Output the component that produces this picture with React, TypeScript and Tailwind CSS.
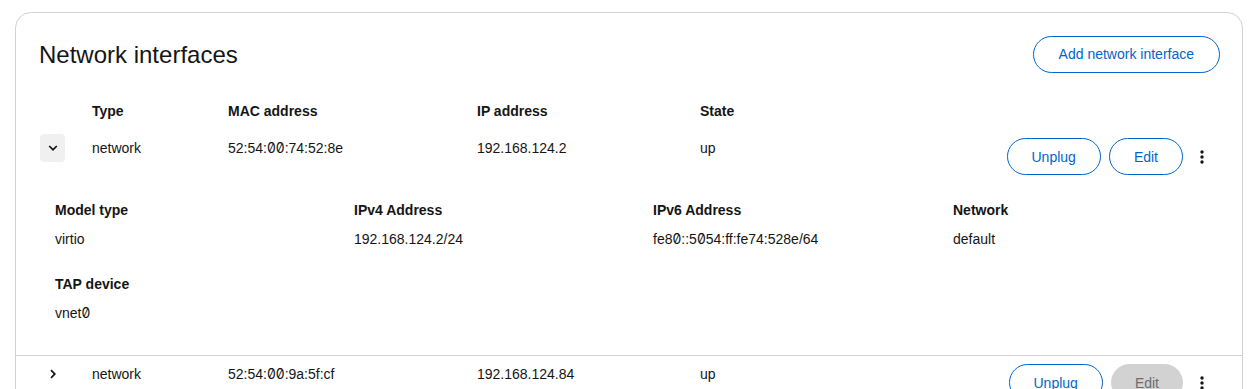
import React from "react";

const font = { fontFamily: '"Liberation Sans", Arial, sans-serif' };

// zeros in the reference are slashed; render them with Inter's slashed-zero
const Z = ({ v }: { v: string }) => (
  <>
    {v.split(/(0)/).map((part, i) =>
      part === "0" ? (
        <span key={i} className="slashed-zero" style={{ fontFamily: "Inter, sans-serif" }}>
          0
        </span>
      ) : (
        <React.Fragment key={i}>{part}</React.Fragment>
      ),
    )}
  </>
);

const ChevronDown = () => (
  <svg viewBox="0 0 10 7" className="h-[7px] w-[10px]" fill="#151515">
    <path d="M0.6 1.6 L1.8 0.4 L5 3.6 L8.2 0.4 L9.4 1.6 L5 6 Z" />
  </svg>
);

const ChevronRight = () => (
  <svg viewBox="0 0 7 10" className="h-[10px] w-[7px]" fill="#151515">
    <path d="M1.6 0.6 L0.4 1.8 L3.6 5 L0.4 8.2 L1.6 9.4 L6 5 Z" />
  </svg>
);

const Kebab = () => (
  <svg viewBox="0 0 4 14" className="h-[14px] w-[4px]" fill="#151515">
    <circle cx="2" cy="2" r="1.7" />
    <circle cx="2" cy="7" r="1.7" />
    <circle cx="2" cy="12" r="1.7" />
  </svg>
);

const rowGrid = "grid grid-cols-[76px_136px_249px_223px_1fr_auto] items-start";

type Iface = {
  mac: string;
  ip: string;
  state: string;
  expanded: boolean;
  editDisabled: boolean;
};

const interfaces: Iface[] = [
  { mac: "52:54:00:74:52:8e", ip: "192.168.124.2", state: "up", expanded: true, editDisabled: false },
  { mac: "52:54:00:9a:5f:cf", ip: "192.168.124.84", state: "up", expanded: false, editDisabled: true },
];

const details = [
  { label: "Model type", value: "virtio" },
  { label: "IPv4 Address", value: "192.168.124.2/24" },
  { label: "IPv6 Address", value: "fe80::5054:ff:fe74:528e/64" },
  { label: "Network", value: "default" },
  { label: "TAP device", value: "vnet0" },
];

function Actions({ editDisabled }: { editDisabled: boolean }) {
  return (
    <div className="flex items-center pr-[24px]">
      <button className="h-[37px] rounded-full border border-[#0066cc] px-[24px] text-[14px] text-[#0066cc]">
        Unplug
      </button>
      {editDisabled ? (
        <button className="ml-2 h-[37px] rounded-full bg-[#d2d2d2] px-[24px] text-[14px] text-[#6a6e73]">
          Edit
        </button>
      ) : (
        <button className="ml-2 h-[37px] rounded-full border border-[#0066cc] px-[24px] text-[14px] text-[#0066cc]">
          Edit
        </button>
      )}
      <button className="ml-[3px] flex h-[37px] w-[32px] items-center justify-center">
        <Kebab />
      </button>
    </div>
  );
}

export default function App() {
  return (
    <div className="min-h-screen bg-white pt-3 text-[#151515]" style={font}>
      <div className="ml-[15px] mr-[8px] rounded-2xl border border-[#d2d2d2] pb-6">
        <div className="flex items-center justify-between pl-[23px] pr-[22px] pt-[23px]">
          <h2 className="text-[24px] leading-[30px]">Network interfaces</h2>
          <button className="h-[37px] rounded-full border border-[#0066cc] px-[25px] text-[14px] text-[#0066cc]">
            Add network interface
          </button>
        </div>

        <div className={`${rowGrid} mt-[28px] text-[14px] font-bold leading-[20px]`}>
          <div />
          <div>Type</div>
          <div>MAC address</div>
          <div>IP address</div>
          <div>State</div>
          <div />
        </div>

        {interfaces.map((iface, idx) => (
          <div key={iface.mac} className={idx > 0 ? "border-t border-[#d2d2d2] pt-[8px]" : "mt-[17px]"}>
            <div className={`${rowGrid} text-[14px] leading-[20px]`}>
              <div className="pl-[24px]">
                {iface.expanded ? (
                  <button className="-mt-[4px] flex h-[28px] w-[25px] items-center justify-center rounded-[4px] bg-[#f0f0f0]">
                    <ChevronDown />
                  </button>
                ) : (
                  <button className="-mt-[4px] flex h-[28px] w-[25px] items-center justify-center pl-[2px]">
                    <ChevronRight />
                  </button>
                )}
              </div>
              <div>network</div>
              <div>
                <Z v={iface.mac} />
              </div>
              <div>{iface.ip}</div>
              <div>{iface.state}</div>
              <Actions editDisabled={iface.editDisabled} />
            </div>

            {iface.expanded && (
              <div className="grid grid-cols-[299px_299px_300px_1fr] gap-y-[25px] pb-[32px] pl-[39px] pt-[25px] text-[14px] leading-[20px]">
                {details.map((d) => (
                  <div key={d.label} className="flex flex-col gap-[9px]">
                    <div className="font-bold">{d.label}</div>
                    <div>
                      <Z v={d.value} />
                    </div>
                  </div>
                ))}
              </div>
            )}
          </div>
        ))}
      </div>
    </div>
  );
}
